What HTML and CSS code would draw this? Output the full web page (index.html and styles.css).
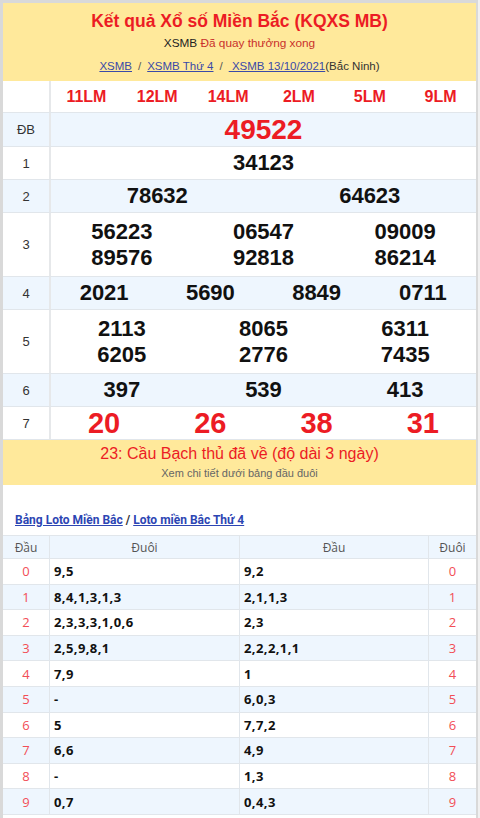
FILE: index.html
```html
<!DOCTYPE html>
<html lang="vi">
<head>
<meta charset="utf-8">
<title>KQXS MB</title>
<link rel="stylesheet" href="styles.css">
</head>
<body>
<div class="wrap">
  <div class="head">
    <h1 class="title">Kết quả Xổ số Miền Bắc (KQXS MB)</h1>
    <p class="sub"><span class="dark">XSMB</span> Đã quay thưởng xong</p>
    <p class="crumb"><a href="#">XSMB</a><span class="sep">/</span><a href="#">XSMB Thứ 4</a><span class="sep">/</span><a href="#">&nbsp;XSMB 13/10/2021</a>(Bắc Ninh)</p>
  </div>

  <div class="kq">
    <div class="row h32 white">
      <div class="lbl"></div>
      <div class="nums six red codes"><span>11LM</span><span>12LM</span><span>14LM</span><span>2LM</span><span>5LM</span><span>9LM</span></div>
    </div>
    <div class="row h34 blue">
      <div class="lbl">ĐB</div>
      <div class="nums one db"><span>49522</span></div>
    </div>
    <div class="row h33 white">
      <div class="lbl">1</div>
      <div class="nums one"><span>34123</span></div>
    </div>
    <div class="row h33 blue">
      <div class="lbl">2</div>
      <div class="nums two"><span>78632</span><span>64623</span></div>
    </div>
    <div class="row h64 white">
      <div class="lbl">3</div>
      <div class="nums three"><span>56223</span><span>06547</span><span>09009</span><span>89576</span><span>92818</span><span>86214</span></div>
    </div>
    <div class="row h33 blue">
      <div class="lbl">4</div>
      <div class="nums four"><span>2021</span><span>5690</span><span>8849</span><span>0711</span></div>
    </div>
    <div class="row h64 white">
      <div class="lbl">5</div>
      <div class="nums three"><span>2113</span><span>8065</span><span>6311</span><span>6205</span><span>2776</span><span>7435</span></div>
    </div>
    <div class="row h33 blue">
      <div class="lbl">6</div>
      <div class="nums three"><span>397</span><span>539</span><span>413</span></div>
    </div>
    <div class="row h33 white">
      <div class="lbl">7</div>
      <div class="nums four g7"><span>20</span><span>26</span><span>38</span><span>31</span></div>
    </div>
  </div>

  <div class="banner">
    <p class="bn-main">23: Cầu Bạch thủ đã về (độ dài 3 ngày)</p>
    <p class="bn-sub">Xem chi tiết dưới bảng đầu đuôi</p>
  </div>

  <p class="loto-links"><a href="#">Bảng Loto Miền Bắc</a> / <a href="#">Loto miền Bắc Thứ 4</a></p>

  <div class="loto">
    <div class="lr hd"><div class="c k">Đầu</div><div class="c ctr">Đuôi</div><div class="c ctr">Đầu</div><div class="c k">Đuôi</div></div>
    <div class="lr"><div class="c k r">0</div><div class="c v">9,5</div><div class="c v">9,2</div><div class="c k r">0</div></div>
    <div class="lr alt"><div class="c k r">1</div><div class="c v">8,4,1,3,1,3</div><div class="c v">2,1,1,3</div><div class="c k r">1</div></div>
    <div class="lr"><div class="c k r">2</div><div class="c v">2,3,3,3,1,0,6</div><div class="c v">2,3</div><div class="c k r">2</div></div>
    <div class="lr alt"><div class="c k r">3</div><div class="c v">2,5,9,8,1</div><div class="c v">2,2,2,1,1</div><div class="c k r">3</div></div>
    <div class="lr"><div class="c k r">4</div><div class="c v">7,9</div><div class="c v">1</div><div class="c k r">4</div></div>
    <div class="lr alt"><div class="c k r">5</div><div class="c v">-</div><div class="c v">6,0,3</div><div class="c k r">5</div></div>
    <div class="lr"><div class="c k r">6</div><div class="c v">5</div><div class="c v">7,7,2</div><div class="c k r">6</div></div>
    <div class="lr alt"><div class="c k r">7</div><div class="c v">6,6</div><div class="c v">4,9</div><div class="c k r">7</div></div>
    <div class="lr"><div class="c k r">8</div><div class="c v">-</div><div class="c v">1,3</div><div class="c k r">8</div></div>
    <div class="lr alt"><div class="c k r">9</div><div class="c v">0,7</div><div class="c v">0,4,3</div><div class="c k r">9</div></div>
  </div>
</div>
</body>
</html>
```

FILE: styles.css
```css
* { box-sizing: border-box; }
html, body { margin: 0; padding: 0; }
body {
  background: #f1f1f1;
  font-family: "Liberation Sans", Arial, sans-serif;
  color: #222;
}
.wrap {
  width: 478px;
  min-height: 818px;
  background: #fff;
  border-left: 3px solid #d9d9d9;
  border-right: 2px solid #d9d9d9;
  border-top: 3px solid #d9d9d9;
}
p { margin: 0; }
a { color: #3148b0; }

.head {
  background: #ffe99b;
  text-align: center;
  height: 78px;
  padding-top: 7px;
}
.title {
  margin: 0;
  font-size: 17.5px;
  line-height: 22px;
  font-weight: bold;
  color: #ec1c24;
}
.sub {
  margin-top: 3px;
  font-size: 11.8px;
  line-height: 16px;
  color: #c9302c;
}
.sub .dark { color: #222; }
.crumb {
  margin-top: 7px;
  font-size: 11.5px;
  line-height: 16px;
  color: #333;
}
.crumb a { color: #3a4aa8; }
.crumb .sep { margin: 0 6px; color: #555; }

.row {
  display: flex;
  border-bottom: 1px solid #e1e6eb;
}
.row.white { background: #fff; }
.row.blue { background: #eef6fe; }
.h32 { height: 32px; }
.h33 { height: 33px; }
.h34 { height: 34px; }
.h64 { height: 64px; }
.lbl {
  width: 48px;
  flex: none;
  border-right: 2px solid #e6e8ea;
  display: flex;
  align-items: center;
  justify-content: center;
  font-size: 13px;
  color: #333;
}
.nums {
  flex: 1;
  display: grid;
  align-items: center;
  justify-items: center;
  font-weight: bold;
  font-size: 22px;
  color: #111;
}
.nums span { line-height: 26px; }
.one { grid-template-columns: 1fr; }
.two { grid-template-columns: 1fr 1fr; }
.three { grid-template-columns: repeat(3, 1fr); align-content: center; }
.four { grid-template-columns: repeat(4, 1fr); }
.six { grid-template-columns: repeat(6, 1fr); }
.red { color: #ec1c24; }
.codes { font-size: 16px; }
.db { color: #ec1c24; font-size: 28px; }
.g7 { color: #ec1c24; font-size: 29px; }
.g7 span { line-height: 32px; }

.banner {
  background: #ffe99b;
  height: 45px;
  text-align: center;
  padding-top: 4px;
}
.bn-main {
  font-size: 16px;
  line-height: 20px;
  color: #ec1c24;
}
.bn-sub {
  margin-top: 2px;
  font-size: 11px;
  line-height: 14px;
  color: #666;
}

.loto-links {
  padding: 26px 0 0 12px;
  height: 50px;
  font-family: Roboto, "Liberation Sans", sans-serif;
  font-size: 12px;
  font-weight: bold;
  line-height: 18px;
  color: #333;
}
.loto-links a { color: #2c45b3; }

.loto {
  font-family: "Open Sans", Roboto, sans-serif;
  border-top: 1px solid #e1e6eb;
}
.lr {
  display: grid;
  grid-template-columns: 47px 190px 189px 1fr;
  height: 25.6px;
  border-bottom: 1px solid #e1e6eb;
  background: #fff;
}
.lr.alt { background: #eef6fe; }
.lr.hd { height: 23px; background: #eef6fe; }
.c {
  display: flex;
  align-items: center;
  border-right: 1px solid #e1e6eb;
  font-size: 13px;
}
.c:last-child { border-right: 0; }
.hd .c { justify-content: center; font-size: 12px; color: #555; }
.k { justify-content: center; }
.r { color: #f24e56; }
.v { font-weight: bold; color: #111; padding-left: 4px; letter-spacing: 0.4px; }
```
